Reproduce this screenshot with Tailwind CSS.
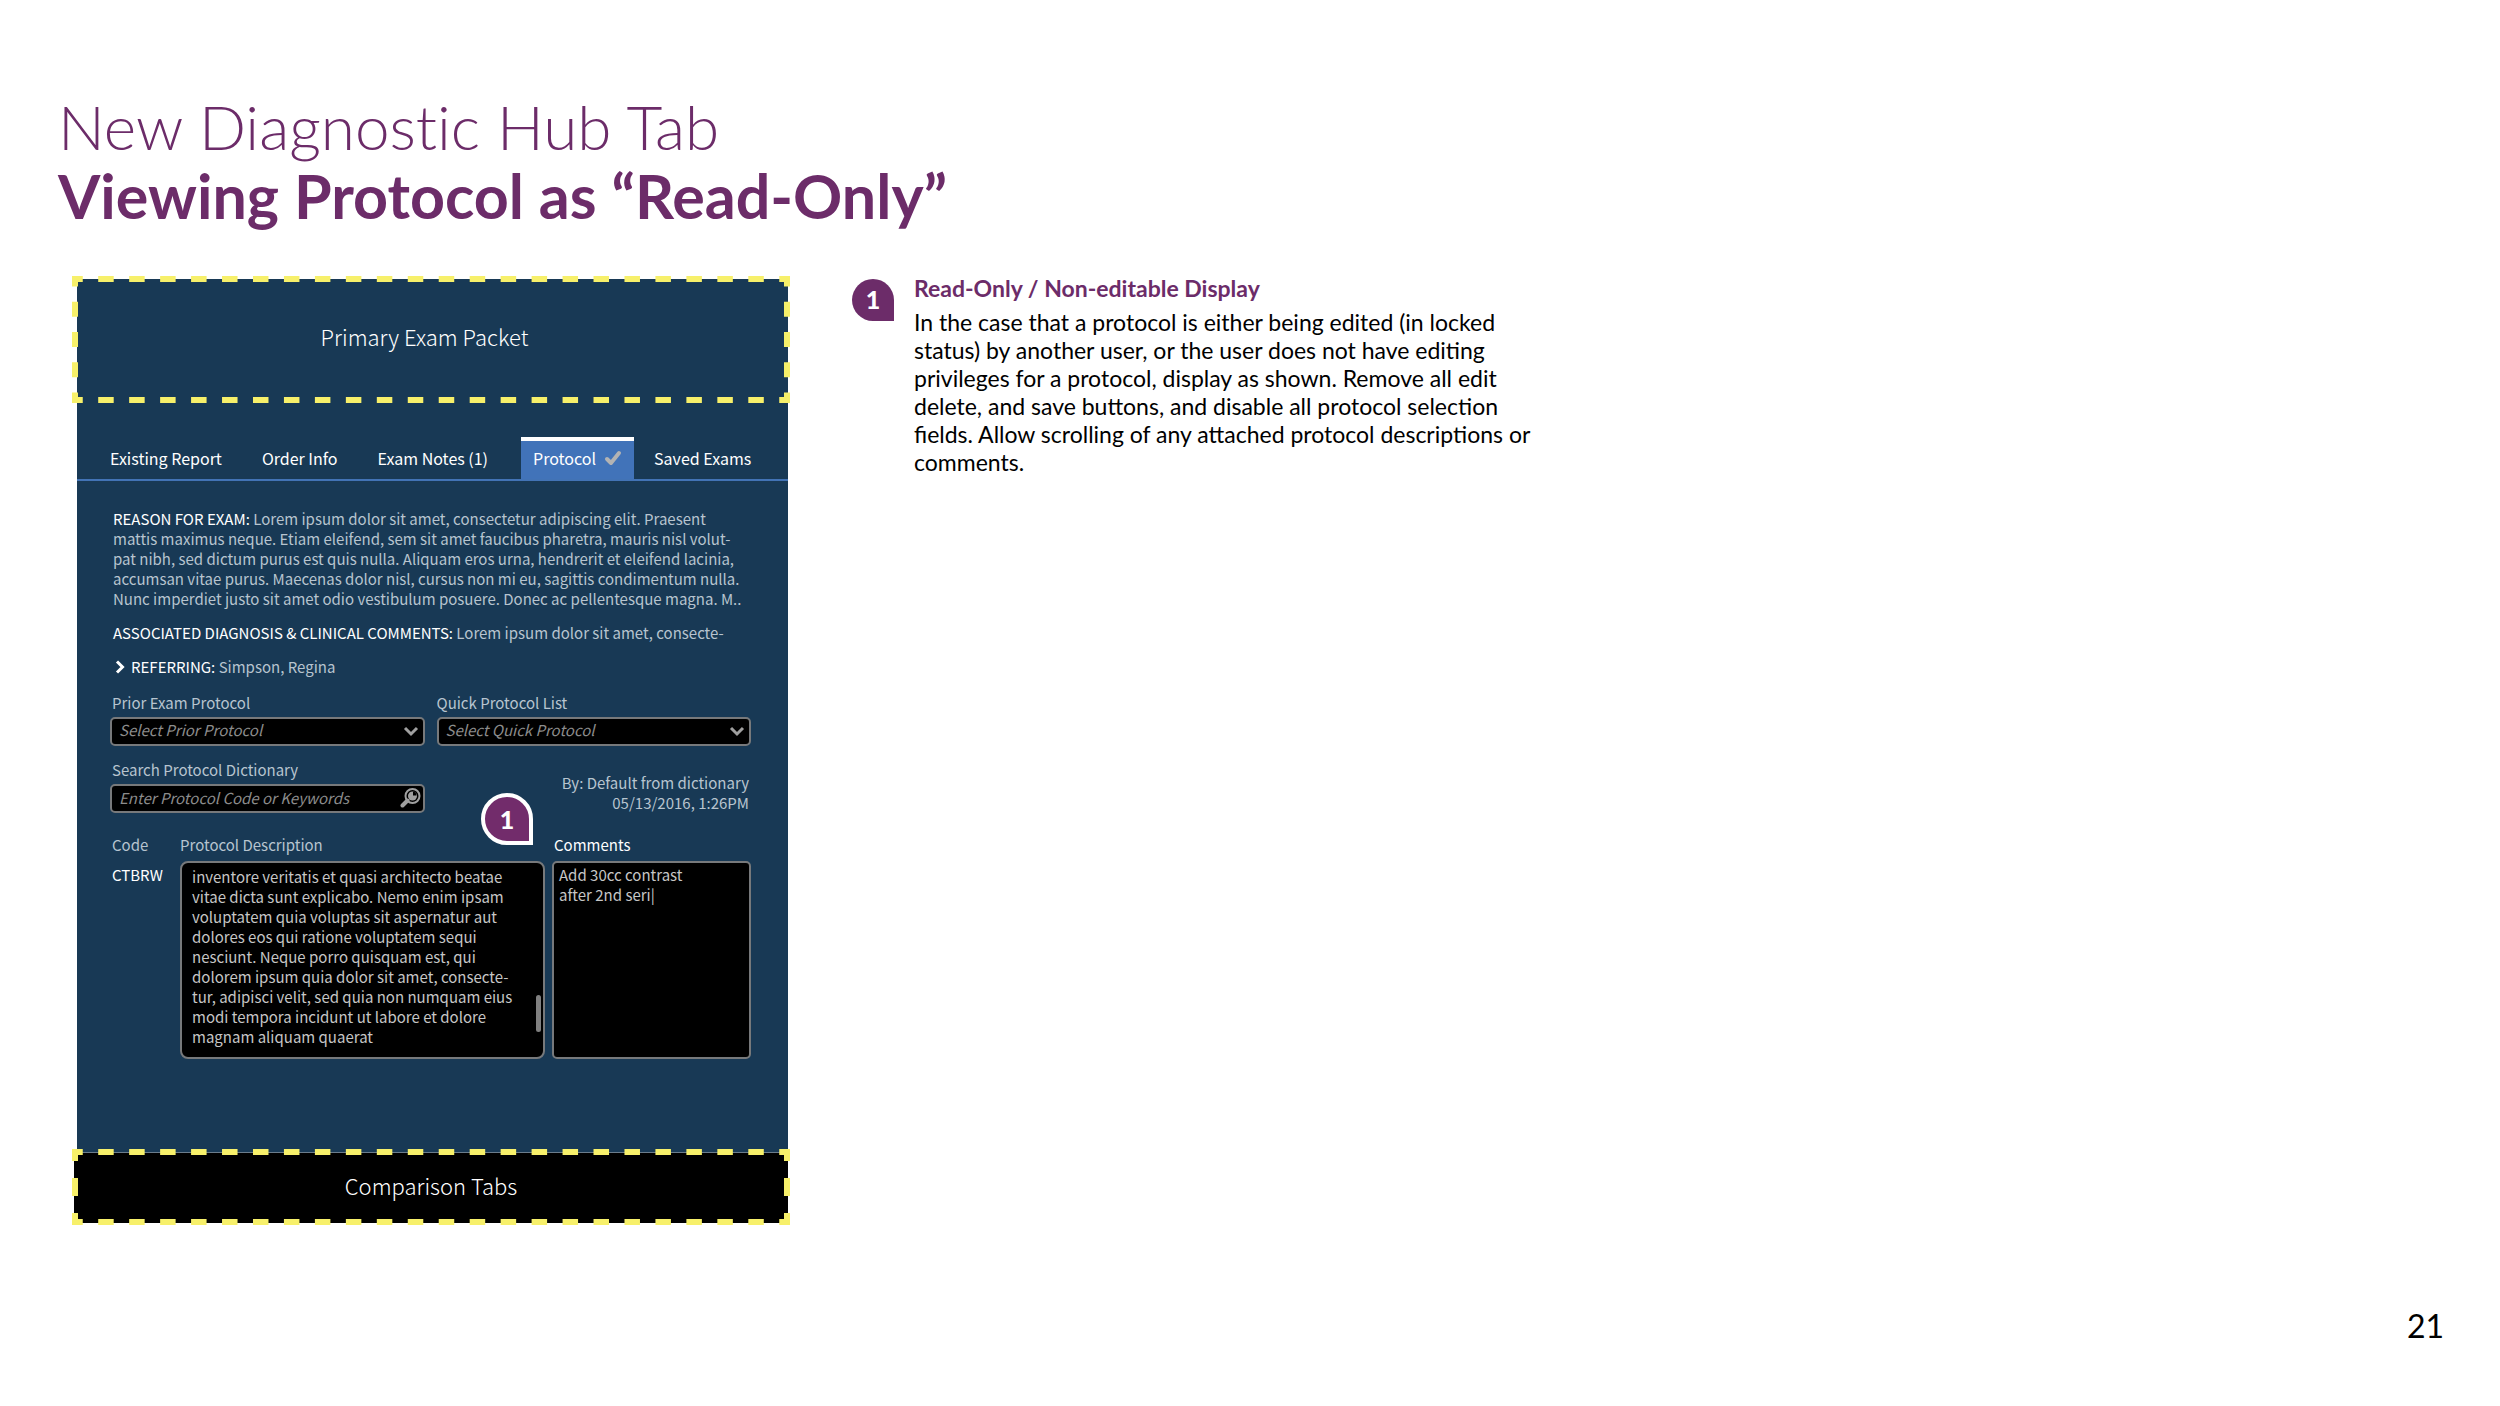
<!DOCTYPE html>
<html lang="en">

<head>
    <meta charset="UTF-8">
    <meta name="viewport" content="width=device-width, initial-scale=1.0">
    <title>New Diagnostic Hub Tab</title>
    <script src="https://cdn.jsdelivr.net/npm/@tailwindcss/browser@4"></script>
</head>

<body class="bg-white">
    <div class="min-h-screen flex flex-col font-['Lato',sans-serif] text-black">
        <header class="pt-[91px] pl-[58px] text-[#6c2c69] [font-variant-ligatures:none]">
            <h1 class="font-light text-[62px] leading-[70px]">New Diagnostic Hub Tab</h1>
            <h2 class="font-bold text-[61px] leading-[70px]">Viewing Protocol as “Read-Only”</h2>
        </header>

        <main class="flex items-start pl-[77px] pt-12">
            <!-- diagnostic hub panel -->
            <section class="relative w-[711px] shrink-0 bg-[#183955] text-[#b7c4cf] text-[15px] leading-5 font-['Noto_Sans_CJK_SC','Noto_Sans',sans-serif]">
                <div class="relative h-[126px] flex items-center justify-center pr-4 pb-3 text-white text-[22px] font-light">
                    Primary Exam Packet
                    <svg class="absolute -top-1 -left-[5px] w-[718px] h-[130px]" viewBox="0 0 718 130" fill="none" stroke="#f7f06a" stroke-width="6">
                        <path d="M3 4H715M3 125H715" stroke-dasharray="15.5 15.457" stroke-dashoffset="7.75" />
                        <path d="M3 4V125M715 4V125" stroke-dasharray="15 15.25" stroke-dashoffset="7.5" />
                        <path d="M0 4H6M712 4H718M0 125H6M712 125H718" />
                    </svg>
                </div>

                <!-- tabs -->
                <nav class="mt-8 h-[44px] flex pl-[13px] border-b-2 border-[#4273b5] text-white text-[16px]">
                    <button class="px-5">Existing Report</button>
                    <button class="px-5">Order Info</button>
                    <button class="px-5">Exam Notes (1)</button>
                    <button class="ml-[13px] px-3 pb-1 flex items-center gap-2 bg-[#4173b9] border-t-4 border-white">
                        Protocol
                        <svg class="w-[18px] h-4" viewBox="0 0 18 16" fill="none" stroke="#b3b3b3" stroke-width="4" stroke-linecap="round" stroke-linejoin="round">
                            <path d="M3 9L7 13L15 3" />
                        </svg>
                    </button>
                    <button class="px-5">Saved Exams</button>
                </nav>

                <div class="pl-9 pt-7 whitespace-nowrap">
                    <p><span class="text-white">REASON FOR EXAM:</span> Lorem ipsum dolor sit amet, consectetur adipiscing elit. Praesent<br>
                        mattis maximus neque. Etiam eleifend, sem sit amet faucibus pharetra, mauris nisl volut-<br>
                        pat nibh, sed dictum purus est quis nulla. Aliquam eros urna, hendrerit et eleifend lacinia,<br>
                        accumsan vitae purus. Maecenas dolor nisl, cursus non mi eu, sagittis condimentum nulla.<br>
                        Nunc imperdiet justo sit amet odio vestibulum posuere. Donec ac pellentesque magna. M..</p>
                    <p class="mt-[14px]"><span class="text-white">ASSOCIATED DIAGNOSIS &amp; CLINICAL COMMENTS:</span> Lorem ipsum dolor sit amet, consecte-</p>
                    <p class="mt-[14px] flex items-center">
                        <svg class="w-[18px] h-3.5" viewBox="0 0 18 14" fill="none" stroke="#fff" stroke-width="3">
                            <path d="M4 1.500L9.500 7L4 12.500" />
                        </svg>
                        <span><span class="text-white">REFERRING:</span> Simpson, Regina</span>
                    </p>
                </div>

                <form class="pl-[33px] pr-[37px] pt-4 pb-[93px]">
                    <div class="grid grid-cols-2 gap-3">
                        <div>
                            <label for="prior" class="block pl-0.5">Prior Exam Protocol</label>
                            <div class="relative mt-1">
                                <select id="prior" disabled class="block appearance-none w-full h-[29px] pl-[7px] pb-1 rounded-[5px] border-2 border-[#77797b] bg-black text-[#8c8c8c] italic opacity-100">
                                    <option>Select Prior Protocol</option>
                                </select>
                                <svg class="absolute right-1.5 top-2 w-4 h-3" viewBox="0 0 16 12" fill="none" stroke="#a0a0a0" stroke-width="3">
                                    <path d="M2 3L8 9L14 3" />
                                </svg>
                            </div>
                        </div>
                        <div>
                            <label for="quick" class="block">Quick Protocol List</label>
                            <div class="relative mt-1">
                                <select id="quick" disabled class="block appearance-none w-full h-[29px] pl-[7px] pb-1 rounded-[5px] border-2 border-[#77797b] bg-black text-[#8c8c8c] italic opacity-100">
                                    <option>Select Quick Protocol</option>
                                </select>
                                <svg class="absolute right-1.5 top-2 w-4 h-3" viewBox="0 0 16 12" fill="none" stroke="#a0a0a0" stroke-width="3">
                                    <path d="M2 3L8 9L14 3" />
                                </svg>
                            </div>
                        </div>
                        <div>
                            <label for="search" class="block pl-0.5 pt-0.5">Search Protocol Dictionary</label>
                            <div class="relative mt-1">
                                <input id="search" type="text" disabled placeholder="Enter Protocol Code or Keywords" class="block w-full h-[29px] pl-[7px] pb-0.5 rounded-[5px] border-2 border-[#77797b] bg-black italic placeholder:text-[#8c8c8c]">
                                <svg class="absolute right-1 top-1 w-[21px] h-5" viewBox="0 0 21 20" fill="none">
                                    <path d="M2.500 17.500L7.500 12.500" stroke="#a0a0a0" stroke-width="4" stroke-linecap="round" />
                                    <circle cx="12.500" cy="8" r="7" stroke="#a0a0a0" stroke-width="2" />
                                    <circle cx="12.500" cy="8" r="4.500" fill="#a0a0a0" />
                                    <path d="M13 7.500V3.500A4 4 0 0 1 16.500 7.500Z" fill="#000" />
                                </svg>
                            </div>
                        </div>
                        <p class="self-end text-right pr-0.5">By: Default from dictionary<br>05/13/2016, 1:26PM</p>
                    </div>

                    <div class="mt-[22px] flex">
                        <div class="w-[70px] pl-0.5">
                            <p>Code</p>
                            <p class="mt-[10px] text-white">CTBRW</p>
                        </div>
                        <div class="flex-1">
                            <label for="description" class="block">Protocol Description</label>
                            <div class="relative mt-[6px]">
                                <textarea id="description" readonly class="block w-full h-[198px] pl-[10px] pt-1 rounded-lg border-2 border-[#77797b] bg-black text-[#c6c6c6] whitespace-pre resize-none overflow-hidden">inventore veritatis et quasi architecto beatae
vitae dicta sunt explicabo. Nemo enim ipsam
voluptatem quia voluptas sit aspernatur aut
dolores eos qui ratione voluptatem sequi
nesciunt. Neque porro quisquam est, qui
dolorem ipsum quia dolor sit amet, consecte-
tur, adipisci velit, sed quia non numquam eius
modi tempora incidunt ut labore et dolore
magnam aliquam quaerat</textarea>
                                <div class="absolute right-1 top-[134px] w-[5px] h-[37px] rounded-sm bg-[#808080]"></div>
                            </div>
                        </div>
                        <div class="w-[199px] ml-[7px]">
                            <label for="comments" class="block pl-0.5 text-white">Comments</label>
                            <textarea id="comments" readonly class="block w-full h-[198px] mt-[6px] pl-[5px] pt-0.5 rounded-[5px] border-2 border-[#77797b] bg-black text-[#c6c6c6] whitespace-pre resize-none overflow-hidden">Add 30cc contrast
after 2nd seri|</textarea>
                        </div>
                    </div>
                </form>

                <!-- callout over the form -->
                <div class="absolute left-[404px] top-[514px] w-[52px] h-[52px] flex items-center justify-center border-4 border-white rounded-full rounded-br-none bg-[#722c6b] text-white font-['Lato',sans-serif] font-black text-[25px]">1</div>

                <div class="relative -ml-[3px] h-[71px] flex items-center justify-center pb-1.5 bg-black border-t border-[#6b7c8b] text-white text-[22px] font-light">
                    Comparison Tabs
                    <svg class="absolute -top-1 -left-0.5 w-[718px] h-[76px]" viewBox="0 0 718 76" fill="none" stroke="#f7f06a" stroke-width="6">
                        <path d="M3 3H715M3 73H715" stroke-dasharray="15.5 15.457" stroke-dashoffset="7.75" />
                        <path d="M3 3V73M715 3V73" stroke-dasharray="18 17" stroke-dashoffset="9" />
                        <path d="M0 3H6M712 3H718M0 73H6M712 73H718" />
                    </svg>
                </div>
            </section>

            <!-- notes -->
            <section class="flex items-start pl-16">
                <div class="w-[42px] h-[42px] shrink-0 flex items-center justify-center rounded-full rounded-br-none bg-[#6c2c69] text-white font-black text-[25px]">1</div>
                <div class="pl-5 -mt-[5px] text-[23px] leading-7">
                    <h3 class="font-bold text-[#6c2c69]">Read-Only / Non-editable Display</h3>
                    <p class="mt-1.5">In the case that a protocol is either being edited (in locked<br>
                        status) by another user, or the user does not have editing<br>
                        privileges for a protocol, display as shown. Remove all edit<br>
                        delete, and save buttons, and disable all protocol selection<br>
                        fields. Allow scrolling of any attached protocol descriptions or<br>
                        comments.</p>
                </div>
            </section>
        </main>

        <footer class="mt-auto pr-14 pb-[60px] text-right text-[32px] leading-10">21</footer>
    </div>
</body>

</html>
